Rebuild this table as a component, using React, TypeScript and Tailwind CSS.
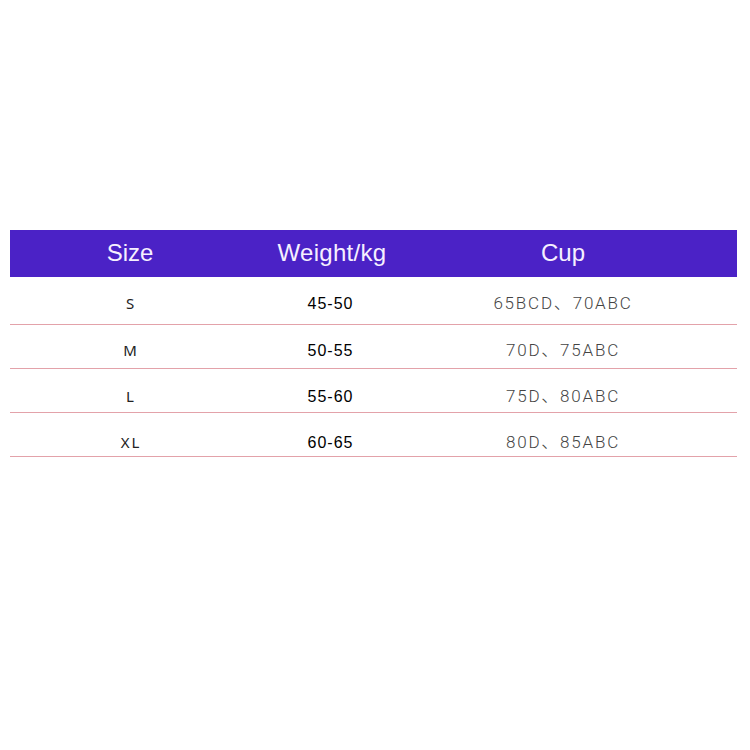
import React from "react";

const rows = [
  { size: "S", weight: "45-50", cup: "65BCD、70ABC", row: "h-[48px] pt-[6px]" },
  { size: "M", weight: "50-55", cup: "70D、75ABC", row: "h-[44px] pt-[8px]" },
  { size: "L", weight: "55-60", cup: "75D、80ABC", row: "h-[44px] pt-[12px]" },
  { size: "XL", weight: "60-65", cup: "80D、85ABC", row: "h-[44px] pt-[16px]" },
];

export default function App() {
  return (
    <div className="w-[750px] h-[750px] bg-white pt-[230px] pl-[10px]">
      <div className="w-[727px]">
        <div
          className="grid grid-cols-[240px_164px_298px_1fr] h-[47px] items-center bg-[#4b22c6] text-[#f6f0ff] text-[24px]"
          style={{ fontFamily: '"Liberation Sans", Arial, sans-serif' }}
        >
          <div className="text-center -mt-[1px]">Size</div>
          <div className="text-center tracking-[0.3px] -mt-[1px]">Weight/kg</div>
          <div className="text-center -mt-[1px]">Cup</div>
          <div />
        </div>
        {rows.map((r) => (
          <div
            key={r.size}
            className={`grid grid-cols-[240px_164px_298px_1fr] items-center border-b border-[#e3a2aa] ${r.row}`}
          >
            <div
              className="text-center text-[15px] text-[#222] tracking-[2px] pl-[2px]"
              style={{ fontFamily: '"Noto Sans", sans-serif' }}
            >
              {r.size}
            </div>
            <div
              className="text-center text-[16px] text-black tracking-[1px] -ml-[3px]"
              style={{ fontFamily: '"Liberation Sans", Arial, sans-serif' }}
            >
              {r.weight}
            </div>
            <div
              className="text-center text-[17px] text-[#444] tracking-[1.8px] font-light"
              style={{ fontFamily: 'Roboto, "Noto Sans CJK SC", sans-serif' }}
            >
              {r.cup}
            </div>
            <div />
          </div>
        ))}
      </div>
    </div>
  );
}
